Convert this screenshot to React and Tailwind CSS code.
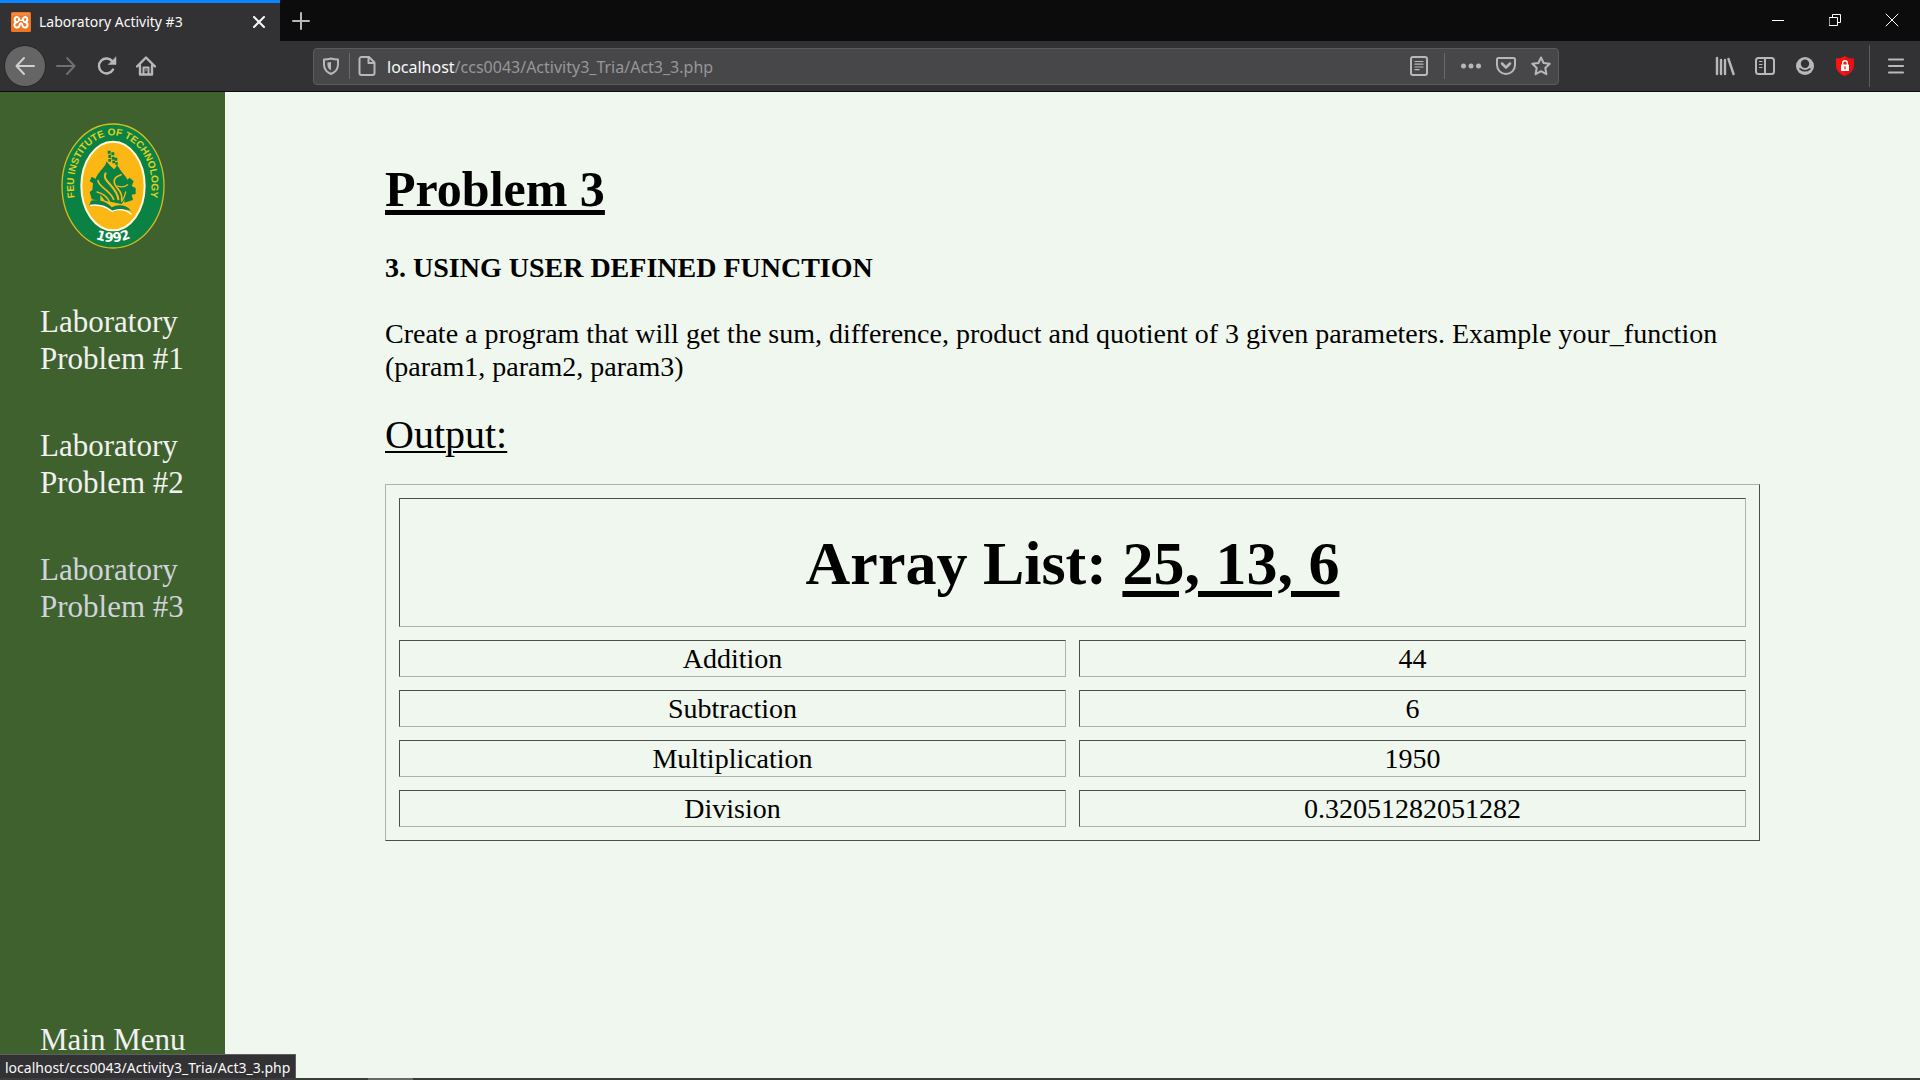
import React from "react";

const problems = ["#1", "#2", "#3"];
const results = [
  ["Addition", "44"],
  ["Subtraction", "6"],
  ["Multiplication", "1950"],
  ["Division", "0.32051282051282"],
];

function IconButton({ label, children, className = "w-10 h-10" }) {
  return (
    <button type="button" aria-label={label} className={`flex shrink-0 items-center justify-center ${className}`}>
      {children}
    </button>
  );
}

function Icon({ children, size = 20, box = 20, color = "#b8b8b9", width = 2 }) {
  return (
    <svg
      width={size}
      height={size}
      viewBox={`0 0 ${box} ${box}`}
      fill="none"
      stroke={color}
      strokeWidth={width}
      strokeLinecap="round"
      strokeLinejoin="round"
      aria-hidden="true"
    >
      {children}
    </svg>
  );
}

function TabBar() {
  return (
    <div className="flex h-[41px] bg-[#0c0c0d]">
      <div className="flex w-[280px] items-center border-t-[3px] border-[#0a84ff] bg-[#323234] pl-[11px]">
        <svg width="20" height="20" viewBox="0 0 20 20" aria-hidden="true">
          <rect width="20" height="20" rx="1.5" fill="#ee7623" />
          <rect x="1" y="1" width="18" height="2.5" fill="#f59a5c" opacity="0.6" />
          <g fill="none" stroke="#fff" strokeWidth="2.1" strokeLinecap="round" strokeLinejoin="round">
            <path d="M8 8.200C9 5 4 3.600 3.700 7.200C3.600 9 4.600 10 6 10.200C4.200 10.400 3.300 11.600 3.500 13.400C4 16.400 8 16.200 8.500 13.400C8.800 11.800 9.200 11.300 10 11.300C10.800 11.300 11.200 11.800 11.500 13.400C12 16.200 16 16.400 16.500 13.400C16.700 11.600 15.800 10.400 14 10.200C15.400 10 16.400 9 16.300 7.200C16 3.600 11 5 12 8.200" />
            <path d="M6.500 10.200L8 8.200H12L13.500 10.200" strokeWidth="1.500" />
          </g>
        </svg>
        <span className="ml-2 flex-1 whitespace-nowrap text-sm text-[#f9f9fa]">Laboratory Activity #3</span>
        <IconButton label="Close tab" className="mr-1 h-8 w-[34px]">
          <Icon size={12} box={12} color="#f9f9fa">
            <path d="M1 1L11 11M11 1L1 11" />
          </Icon>
        </IconButton>
      </div>
      <IconButton label="New tab" className="h-[41px] w-[42px]">
        <Icon size={18} box={18}>
          <path d="M9 1V17M1 9H17" />
        </Icon>
      </IconButton>
      <div className="ml-auto flex">
        <IconButton label="Minimize" className="h-[39px] w-[57px]">
          <Icon size={12} box={12} color="#fff" width={1}>
            <path d="M0 6.500H12" strokeLinecap="butt" />
          </Icon>
        </IconButton>
        <IconButton label="Restore" className="h-[39px] w-[57px]">
          <Icon size={12} box={12} color="#fff" width={1}>
            <path d="M0.500 3.500H8.500V11.500H0.500ZM3.500 3V0.500H11.500V8.500H9" strokeLinejoin="miter" />
          </Icon>
        </IconButton>
        <IconButton label="Close window" className="h-[39px] w-[57px]">
          <Icon size={14} box={14} color="#fff" width={1}>
            <path d="M1 1L13 13M13 1L1 13" />
          </Icon>
        </IconButton>
      </div>
    </div>
  );
}

function AddressBar() {
  return (
    <form
      className="flex h-[37px] flex-1 items-center rounded-sm border border-[#5b5b5d] bg-[#474749] pl-[5px] pr-[5px]"
      onSubmit={(e) => e.preventDefault()}
    >
      <IconButton label="Tracking protection" className="h-8 w-6">
        <Icon size={18} box={18}>
          <path d="M9 1.500C11.500 2.300 14 2.500 16 2.500V7.500C16 12.500 12.500 15.500 9 17C5.500 15.500 2 12.500 2 7.500V2.500C4 2.500 6.500 2.300 9 1.500Z" />
          <path d="M9 5V13.500C6.500 12 5.400 10 5.400 7.500V5.600Z" fill="#b8b8b9" stroke="none" />
        </Icon>
      </IconButton>
      <span className="ml-[6px] h-[26px] w-px bg-[#6a6a6c]" />
      <IconButton label="Site information" className="ml-[5px] h-8 w-6">
        <Icon>
          <path d="M4.500 1H12L17.500 6.500V17A2 2 0 0 1 15.500 19H4.500A2 2 0 0 1 2.500 17V3A2 2 0 0 1 4.500 1ZM11.500 1.500V7H17" />
        </Icon>
      </IconButton>
      <div className="ml-2 flex min-w-0 flex-1 pt-[2px] text-base">
        <label htmlFor="address" className="text-[#f9f9fa]">
          localhost
        </label>
        <input
          id="address"
          type="text"
          defaultValue="/ccs0043/Activity3_Tria/Act3_3.php"
          className="min-w-0 flex-1 bg-transparent text-[#97979a] outline-none"
        />
      </div>
      <IconButton label="Reader view" className="h-8 w-6">
        <Icon>
          <rect x="2" y="1" width="16" height="18" rx="2" />
          <path d="M6 5.500H14M6 8.200H14M6 11H14M6 13.700H10" strokeWidth="1.200" />
        </Icon>
      </IconButton>
      <span className="ml-[13px] h-[26px] w-px bg-[#6a6a6c]" />
      <IconButton label="Page actions" className="ml-[14px] h-8 w-6">
        <Icon>
          <g fill="#b8b8b9" stroke="none">
            <circle cx="2.500" cy="10" r="2.500" />
            <circle cx="10" cy="10" r="2.500" />
            <circle cx="17.500" cy="10" r="2.500" />
          </g>
        </Icon>
      </IconButton>
      <IconButton label="Save to Pocket" className="ml-[11px] h-8 w-6">
        <Icon>
          <path d="M2.500 2H17.500A1.500 1.500 0 0 1 19 3.500V9A9 9 0 0 1 1 9V3.500A1.500 1.500 0 0 1 2.500 2Z" />
          <path d="M6 7.500L10 11.500L14 7.500" strokeWidth="2.500" />
        </Icon>
      </IconButton>
      <IconButton label="Bookmark this page" className="ml-[11px] h-8 w-6">
        <Icon>
          <path d="M10 1.500L12.600 7L18.700 7.800L14.300 12L15.400 18.200L10 15.200L4.600 18.200L5.700 12L1.300 7.800L7.400 7Z" />
        </Icon>
      </IconButton>
    </form>
  );
}

function Toolbar() {
  return (
    <div className="flex h-[51px] items-center border-b border-[#0c0c0d] bg-[#323234]">
      <div className="flex w-[313px] items-center gap-px pl-[5px]">
        <IconButton label="Back" className="h-10 w-10 rounded-full bg-[#656566] ring-1 ring-[#29292b]">
          <Icon color="#d0d0d0">
            <path d="M19 10H1.500M9 2L1.500 10L9 18" />
          </Icon>
        </IconButton>
        <IconButton label="Forward">
          <Icon color="#6f6f71">
            <path d="M1 10H18.500M11 2L18.500 10L11 18" />
          </Icon>
        </IconButton>
        <IconButton label="Reload">
          <Icon width={2.4}>
            <path d="M16 13.600A7.500 7.500 0 1 1 15.500 5.500" />
            <path d="M19 1V8.500H11.500Z" fill="#b8b8b9" strokeWidth="0.500" />
          </Icon>
        </IconButton>
        <IconButton label="Home" className="h-10 w-9">
          <Icon>
            <path d="M1 10.500L10 1.500L19 10.500M4 9.500V18.500H16V9.500" strokeWidth="2.400" />
            <path d="M7.500 18V11.500H12.500V18" strokeWidth="2" />
            <path d="M10 13V15" strokeWidth="1" />
          </Icon>
        </IconButton>
      </div>
      <AddressBar />
      <div className="flex w-[361px] items-center justify-end pr-1">
        <IconButton label="Library">
          <Icon width={2.4}>
            <path d="M2 2V18M6 4V18M10 4V18M13.500 3L18.500 18" />
          </Icon>
        </IconButton>
        <IconButton label="Sidebars">
          <Icon>
            <rect x="1" y="2" width="18" height="16" rx="2.500" />
            <path d="M10 2V18" />
            <path d="M4.500 5.500H7M4.500 8.500H7M4.500 11.500H7" strokeWidth="1.200" />
          </Icon>
        </IconButton>
        <IconButton label="Account">
          <Icon>
            <circle cx="10" cy="10" r="9" fill="#b8b8b9" stroke="none" />
            <circle cx="10" cy="7.800" r="4.200" fill="#323234" stroke="none" />
            <path d="M5 12.800Q10 16.800 15 12.800" stroke="#323234" strokeWidth="1.500" />
          </Icon>
        </IconButton>
        <IconButton label="Shield extension">
          <Icon>
            <path d="M10 0C12.500 2 16 2.500 19 2.500V9C19 14.500 15 18 10 20C5 18 1 14.500 1 9V2.500C4 2.500 7.500 2 10 0Z" fill="#e81010" stroke="none" />
            <path d="M10 0C7.500 2 4 2.500 1 2.500V9C1 14.500 5 18 10 20Z" fill="#fb1414" stroke="none" />
            <rect x="6" y="8.500" width="8" height="6.500" rx="0.500" fill="#fff" stroke="none" />
            <path d="M7.700 8.500V7A2.300 2.300 0 0 1 12.300 7V8.500" stroke="#fff" strokeWidth="1.400" />
            <path d="M10 11V12.500" stroke="#e81010" strokeWidth="1.300" />
          </Icon>
        </IconButton>
        <span className="ml-1 h-[42px] w-px bg-[#5c5c5e]" />
        <IconButton label="Open menu" className="ml-[6px] h-10 w-10">
          <Icon width={2.2}>
            <path d="M3 3.500H17M3 10H17M3 16.500H17" />
          </Icon>
        </IconButton>
      </div>
    </div>
  );
}

function SchoolSeal() {
  return (
    <svg width="104" height="126" viewBox="32 33 312 378" role="img" aria-label="School seal">
      <defs>
        <path id="sealTop" d="M76 268C50 152 120 70 187 70C254 70 324 152 298 268" />
        <path id="sealBottom" d="M116 372Q188 410 260 368" />
      </defs>
      <ellipse cx="188" cy="222" rx="153" ry="186" fill="#0a8244" stroke="#d9bb1c" strokeWidth="4" />
      <ellipse cx="188" cy="222" rx="95" ry="133" fill="#fbb714" stroke="#fffbe0" strokeWidth="6" />
      <text fill="#e3cf1e" fontSize="30" fontWeight="700" fontFamily="Liberation Sans, sans-serif">
        <textPath href="#sealTop" startOffset="50%" textAnchor="middle">
          FEU INSTITUTE OF TECHNOLOGY
        </textPath>
      </text>
      <text fill="#fff" fontSize="39" fontWeight="700" fontFamily="DejaVu Sans, sans-serif">
        <textPath href="#sealBottom" startOffset="50%" textAnchor="middle">
          1992
        </textPath>
      </text>
      <g fill="#0a8244">
        <path d="M172 116h9v9h-9zM183 121h9v9h-9zM174 128h8v10h-8zM184 134h9v9h-9zM193 137h8v9h-8zM174 141h8v8h-8zM186 146h8v8h-8zM195 150h7v9h-7z" />
        <path d="M138 202L124 194L118 208L128 214L126 234L118 240L124 262L150 268V206Z" />
        <path d="M226 208L238 197L250 208L244 222L256 228V246L244 248L248 264L222 272Z" />
        <path d="M168 148C168 168 132 184 134 216C136 238 152 250 164 266L214 276C238 246 242 214 226 194C216 182 208 172 200 158C198 164 195 168 191 172C184 166 176 158 168 148Z" />
        <path d="M122 266C148 262 168 268 184 286C204 276 228 278 242 296C222 290 202 292 186 300C168 284 146 278 116 282Z" />
      </g>
      <g fill="none" stroke="#fbb714" strokeLinecap="round">
        <path d="M143 206C146 226 178 234 190 262" strokeWidth="5" />
        <path d="M166 184C152 206 200 222 204 262" strokeWidth="6" />
        <path d="M212 188C182 198 190 216 204 232C212 242 216 252 214 264" strokeWidth="5" />
        <path d="M232 218C222 226 212 226 202 222" strokeWidth="4" />
        <path d="M140 240C158 244 170 254 178 270" strokeWidth="4" />
        <path d="M226 240C224 252 220 260 214 268" strokeWidth="4" />
      </g>
      <path d="M120 280C148 276 168 284 185 298C204 290 226 292 242 306" fill="none" stroke="#fff" strokeWidth="4" strokeLinecap="round" />
    </svg>
  );
}

function Sidebar() {
  return (
    <nav className="flex w-[225px] shrink-0 flex-col bg-[#3f612d] px-10 pb-5 pt-[31px] text-[31px] leading-[37px] text-[#f1f1f1]">
      <div className="flex justify-center">
        <SchoolSeal />
      </div>
      <ul className="mt-[54px] flex flex-col gap-[50px]">
        {problems.map((n) => (
          <li key={n}>
            <a href={`#problem${n.slice(1)}`} className={n === "#3" ? "block text-[#cfd4dc]" : "block"}>
              Laboratory
              <br />
              <span className="whitespace-nowrap">Problem {n}</span>
            </a>
          </li>
        ))}
      </ul>
      <a href="#menu" className="mt-auto whitespace-nowrap pt-[50px]">
        Main Menu
      </a>
    </nav>
  );
}

const cell =
  "border border-t-[#4d4d4d] border-l-[#4d4d4d] border-b-[#b0b0b0] border-r-[#b0b0b0] p-px text-center";

function Content() {
  return (
    <main className="flex-1 bg-[#eff7ee] px-40 pb-16 pt-[69px] text-[28px] leading-[33px] text-black">
      <h1 className="text-[50px] font-bold leading-[57px] underline decoration-[5px] underline-offset-4">
        Problem 3
      </h1>
      <h2 className="mt-[33px] font-bold">3. USING USER DEFINED FUNCTION</h2>
      <p className="mt-[33px]">
        Create a program that will get the sum, difference, product and quotient of 3 given parameters. Example
        your_function (param1, param2, param3)
      </p>
      <p className="mt-[29px] text-[40px] leading-[46px] underline decoration-2 underline-offset-[3px]">Output:</p>
      <table className="mt-[26px] w-full table-fixed border-separate border-spacing-[13px] border border-b-[#4d4d4d] border-l-[#b0b0b0] border-r-[#4d4d4d] border-t-[#b0b0b0]">
        <thead>
          <tr>
            <th colSpan={2} className={`h-[129px] text-[62px] font-bold leading-[72px] ${cell}`}>
              Array List: <span className="underline decoration-[6px] underline-offset-[7px]">25, 13, 6</span>
            </th>
          </tr>
        </thead>
        <tbody>
          {results.map(([name, value]) => (
            <tr key={name}>
              <td className={cell}>{name}</td>
              <td className={cell}>{value}</td>
            </tr>
          ))}
        </tbody>
      </table>
    </main>
  );
}

export default function App() {
  return (
    <div className="relative flex min-h-screen flex-col">
      <header className="font-['Noto_Sans',sans-serif]">
        <TabBar />
        <Toolbar />
      </header>
      <div className="flex flex-1 font-['Liberation_Serif',serif]">
        <Sidebar />
        <Content />
      </div>
      <div className="flex h-[2px] bg-[#3c3c3c]">
        <span className="ml-[368px] w-[45px] bg-[#6a6a6a]" />
      </div>
      <div className="absolute bottom-[2px] left-0 flex h-6 items-center border-r border-t border-[#5e5e60] bg-[#323234] px-[5px] pt-[2px] font-['Noto_Sans',sans-serif] text-sm text-[#f9f9fa]">
        localhost/ccs0043/Activity3_Tria/Act3_3.php
      </div>
    </div>
  );
}
